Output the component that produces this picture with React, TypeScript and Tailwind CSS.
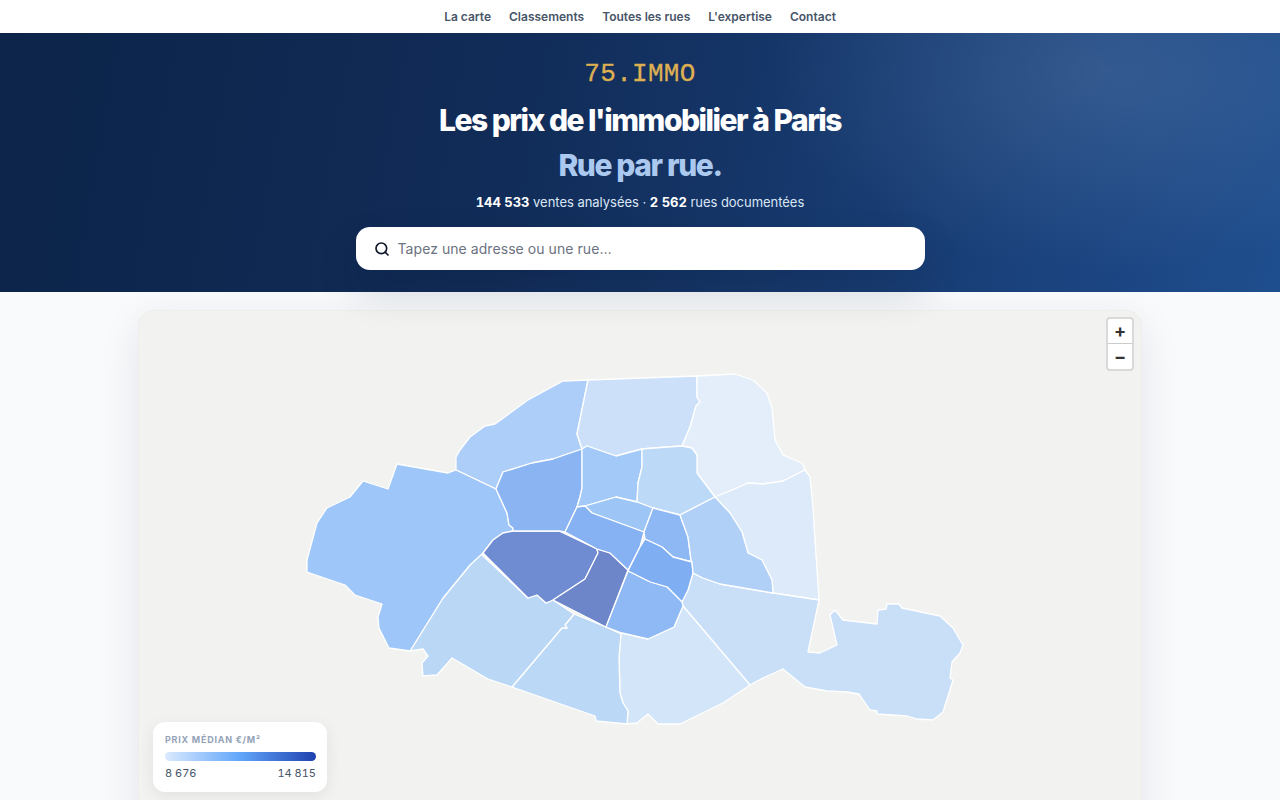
import React from "react";
import { Search } from "lucide-react";

type Arr = { id: number; fill: string; pts: string };

// coordinates are page pixels, the svg viewBox starts at the card's inner corner
const arrondissements: Arr[] = [
  { id: 17, fill: "#aecefa", pts: "456,470 456,457 460,450 470,437 485,426 495,424 528,400 563,381 588,380 577,434 582,449 553,459 532,463 503,472 496,489" },
  { id: 18, fill: "#cce0f9", pts: "588,380 697,376 697,397 700,402 696,406 690,427 682,446 667,447 642,449 616,456 587,446 582,449 577,434" },
  { id: 19, fill: "#e4eefa", pts: "697,376 735,374 753,380 767,393 772,408 775,440 783,455 802,463 805,470 783,481 763,484 748,483 737,488 715,497 697,473 697,455 692,448 682,446 690,427 696,406 700,402 697,397" },
  { id: 20, fill: "#dceafa", pts: "805,470 810,477 813,507 815,540 819,600 773,593 772,580 762,560 748,553 742,532 730,513 715,497 737,488 748,483 763,484 783,481" },
  { id: 12, fill: "#c9dff8", pts: "819,600 808,652 820,653 837,645 830,615 835,610 843,620 877,624 878,610 886,609 887,604 899,604 902,608 940,616 953,628 963,645 960,653 952,662 950,678 953,680 943,712 933,720 917,719 907,716 877,714 877,711 870,710 859,694 847,692 827,691 805,687 783,669 765,677 750,685 683,606 682,602 688,590 693,573 703,578 720,584 773,593" },
  { id: 13, fill: "#d3e5f8", pts: "683,606 674,627 648,639 622,633 621,634 619,657 620,693 623,703 628,711 627,724 637,723 648,714 658,724 680,724 723,703 750,685" },
  { id: 14, fill: "#bbd8f7", pts: "574,614 606,627 621,634 619,657 620,693 623,703 628,711 627,724 596,721 595,716 512,687 562,628 567,628 565,625" },
  { id: 15, fill: "#bad7f6", pts: "481,554 528,598 537,595 546,603 553,600 574,614 565,625 567,628 562,628 512,687 488,679 452,658 437,675 423,676 422,663 428,656 423,649 410,651 443,598 470,565" },
  { id: 16, fill: "#9ec6f8", pts: "307,572 307,560 317,523 327,508 350,497 363,481 388,489 397,464 448,473 456,470 496,489 507,513 509,525 513,528 513,531 503,533 493,540 483,553 470,565 443,598 410,651 389,648 379,628 378,617 382,604 355,595 345,585" },
  { id: 7, fill: "#6f8bd2", pts: "483,553 493,540 503,533 513,531 559,531 597,549 598,553 585,579 553,600 546,603 537,595 528,598" },
  { id: 6, fill: "#6d85c9", pts: "597,549 610,553 628,570 606,627 553,600 585,579 598,553" },
  { id: 8, fill: "#8ab5f2", pts: "503,472 532,463 553,459 582,449 582,488 580,497 577,507 565,532 559,531 513,531 513,528 509,525 507,513 496,489" },
  { id: 9, fill: "#a3c9f8", pts: "582,449 587,446 616,456 642,449 642,467 638,483 637,502 616,497 585,506 577,507 580,497 582,488" },
  { id: 10, fill: "#bcdaf8", pts: "642,449 667,447 682,446 692,448 697,455 697,473 715,497 680,515 653,508 637,502 638,483 642,467" },
  { id: 3, fill: "#9dc5f6", pts: "585,506 616,497 637,502 653,508 644,532 592,513" },
  { id: 2, fill: "#86b2f3", pts: "577,507 585,506 592,513 644,532 640,547 628,570 610,553 597,549 565,532" },
  { id: 4, fill: "#8db8f4", pts: "653,508 680,515 688,537 691,560 692,562 673,557 662,547 645,539 644,532" },
  { id: 1, fill: "#80aef3", pts: "645,539 662,547 673,557 692,562 693,573 688,590 682,602 667,587 650,582 628,571 640,547" },
  { id: 5, fill: "#8fb9f5", pts: "628,571 650,582 667,587 682,602 683,606 674,627 648,639 622,633 606,627" },
  { id: 11, fill: "#b0d0f8", pts: "680,515 715,497 730,513 742,532 748,553 762,560 772,580 773,593 720,584 703,578 693,573 692,562 691,560 688,537" },
];

const navLinks = ["La carte", "Classements", "Toutes les rues", "L'expertise", "Contact"];

function ParisMap() {
  return (
    <svg viewBox="139 311 1004 490" className="absolute top-0 left-0 w-[1004px] h-[490px]">
      {arrondissements.map((a) => (
        <polygon key={a.id} points={a.pts} fill={a.fill} stroke="#ffffff" strokeWidth={1.3} strokeLinejoin="round" />
      ))}
    </svg>
  );
}

export default function App() {
  return (
    <div className="h-screen overflow-hidden bg-[#f8fafc] font-['Inter',sans-serif]">
      <nav className="h-[33px] bg-white flex items-center justify-center gap-[18px] text-[12px] font-semibold text-[#475569]">
        {navLinks.map((l) => (
          <a key={l} href="#">
            {l}
          </a>
        ))}
      </nav>

      <header className="relative z-10 h-[259px] flex flex-col items-center pt-[26px] bg-[radial-gradient(ellipse_340px_200px_at_1110px_40px,rgba(90,125,170,0.4),rgba(90,125,170,0)),linear-gradient(100deg,#0c2449_0%,#112c58_40%,#1b4480_85%,#1f4e8e_100%)]">
        <div className="font-['Liberation_Mono',monospace] text-[26px] leading-[30px] tracking-[0.3px] text-[#deb052] [-webkit-text-stroke:0.3px_#deb052]">
          75.IMMO
        </div>
        <h1 className="mt-[13px] text-[30px] leading-[36px] font-extrabold tracking-[-1.5px] text-white">
          Les prix de l'immobilier à Paris
        </h1>
        <div className="mt-[9px] text-[30px] leading-[36px] font-extrabold tracking-[-1.4px] text-[#abc8ee]">
          Rue par rue.
        </div>
        <p className="mt-[10px] text-[13px] leading-[18px] tracking-[-0.03px] text-[#dbe6f5]">
          <strong className="font-bold tabular-nums text-white">144 533</strong> ventes analysées ·{" "}
          <strong className="font-bold tabular-nums text-white">2 562</strong> rues documentées
        </p>
        <div className="mt-[16px] w-[569px] h-[43px] flex items-center gap-[8px] px-[18px] rounded-[14px] bg-white shadow-[0_20px_40px_rgba(15,23,42,0.16)]">
          <Search className="w-[16px] h-[16px] text-[#0f172a]" strokeWidth={2.5} />
          <span className="text-[14px] tracking-[0.06px] text-[#6b7280]">Tapez une adresse ou une rue…</span>
        </div>
      </header>

      <main className="pt-[18px] flex justify-center">
        <section className="relative w-[1004px] h-[560px] rounded-2xl bg-[#f2f2f0] border border-[#eeeeec] shadow-[0_10px_40px_rgba(15,23,42,0.09)] overflow-hidden">
          <ParisMap />

          <div className="absolute top-[6px] right-[7px] w-[28px] rounded-[4px] border-2 border-black/15 bg-white flex flex-col text-[#333333]">
            <div className="h-[25px] flex items-center justify-center border-b border-[#cccccc] text-[18px] font-bold leading-none">
              +
            </div>
            <div className="h-[25px] flex items-center justify-center text-[18px] font-bold leading-none">
              −
            </div>
          </div>

          <div className="absolute top-[411px] left-[14px] w-[174px] h-[70px] rounded-xl bg-white pl-[12px] pr-[11px] pt-[12px] shadow-[0_4px_16px_rgba(15,23,42,0.07)]">
            <div className="text-[9px] leading-[12px] font-bold tracking-[0.75px] text-[#94a3b8]">PRIX MÉDIAN €/M²</div>
            <div className="mt-[6px] h-[9px] rounded-full bg-[linear-gradient(90deg,#dbeafe,#60a5fa_50%,#1e40af)]" />
            <div className="mt-[4px] flex justify-between text-[11px] leading-[16px] tabular-nums text-[#475569]">
              <span>8 676</span>
              <span>14 815</span>
            </div>
          </div>
        </section>
      </main>
    </div>
  );
}
